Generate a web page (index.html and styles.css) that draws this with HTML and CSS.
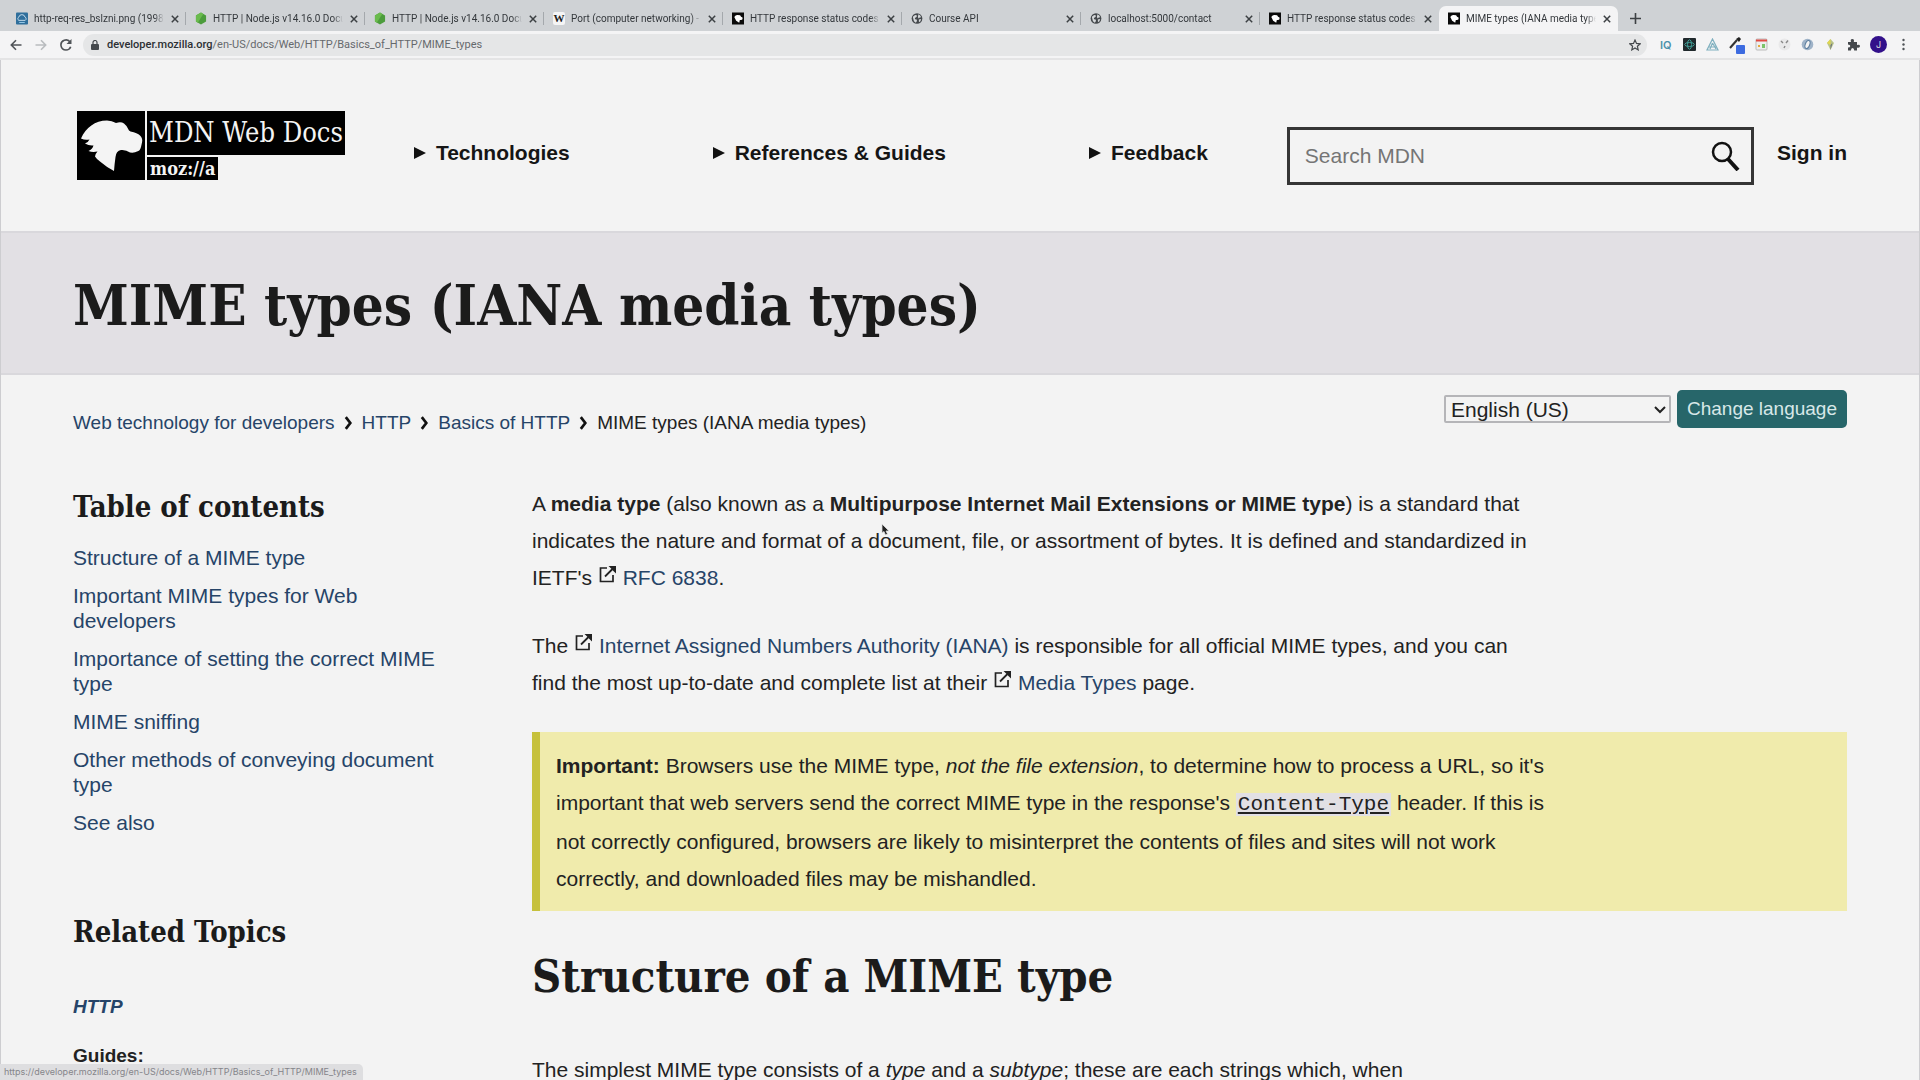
FILE: index.html
```html
<!DOCTYPE html>
<html lang="en">
<head>
<meta charset="utf-8">
<title>MIME types (IANA media types)</title>
<link rel="stylesheet" href="styles.css">
</head>
<body>
<svg class="defs" width="0" height="0" aria-hidden="true">
  <symbol id="close" viewBox="0 0 10 10"><path d="M1.8 1.8l6.4 6.4M8.2 1.8L1.8 8.2" stroke="#3c4043" stroke-width="1.5" fill="none"/></symbol>
  <symbol id="node" viewBox="0 0 13 14"><path d="M6.5 .5l5.5 3.2v6.6l-5.500 3.2L1 10.300V3.700z" fill="#4c9c3c"/><path d="M6.500 .5L1 3.700v6.600l2 1.200L9 2z" fill="#6abb4d"/></symbol>
  <symbol id="dino" viewBox="0 0 68 68"><path fill="#f4f4f4" d="M4 27C9 16 18 9 30 9q5 0 9 2.500 5-1.500 8 .5 3 2 5 7l1.500 1q7 1.500 9.500 4 3 3 2 7l-1 4.500q-1 4-4 4.500-2 1.500-7 1-4-3-9-2.500-5 1-5.500 7-1 7-1.500 14Q30 56 23 50q-3.500-2.500-5-5 .5-3 2.500-5-5 1-9-.5 4-2 5-5.500-4.500.5-8.500-2 3.500-1.500 4.500-4Q8 29 4 27z"/></symbol>
  <symbol id="mdn" viewBox="0 0 13 13"><rect width="13" height="13" fill="#0a0a0a"/><path d="M2.500 5Q4 2.500 6 2.800L8.800 3l1 1.500 1.600.8v2l-1.400.8H8.500L7.800 11 4.500 9z" fill="#fff"/></symbol>
  <symbol id="globe" viewBox="0 0 13 13"><circle cx="6.500" cy="6.500" r="5.800" fill="#44484c"/><path d="M2 4.500l2.500-1.800 2 .6-.5 1.700-1.800 1 .3 1.200 2 .6-.3 2-1 1.200-2-1.500-.6-2.200zM8 2l2 1.200 1 2-1.500.2-1.300 1L7.500 5zM8.500 7.500l2.500-.5-.8 2.500-1.600 1z" fill="#d5d8da"/></symbol>
  <symbol id="chev" viewBox="0 0 10 16"><path d="M2 1.500L7 8l-5 6.500" fill="none" stroke="#111" stroke-width="3"/></symbol>
  <symbol id="tri" viewBox="0 0 12 12"><path d="M0 0l12 6-12 6z" fill="#111"/></symbol>
  <symbol id="ext" viewBox="0 0 18 18"><path d="M8 3H1.500v13.500H14V10" fill="none" stroke="#222" stroke-width="1.700"/><path d="M6 11.500L13.500 4" stroke="#222" stroke-width="1.800"/><path d="M9.500 1H17v7.500l-2.600-2.600-2.300-2.300z" fill="#222"/></symbol>
</svg>

<div class="browser">
  <div class="tabs">
    <div class="tab"><svg class="fav" viewBox="0 0 13 13"><rect width="13" height="13" rx="1" fill="#2f6f9c"/><path d="M3 8.500a2 2 0 010-3.500 3.500 3.500 0 016.800 0 2 2 0 01.2 3.500z" fill="none" stroke="#cfe3f0"/><path d="M3.500 10.800h6" stroke="#9ed0ee"/></svg><span class="tab-title">http-req-res_bslzni.png (1998</span><svg class="x"><use href="#close"/></svg></div>
    <div class="tab"><svg class="fav"><use href="#node"/></svg><span class="tab-title">HTTP | Node.js v14.16.0 Docu</span><svg class="x"><use href="#close"/></svg></div>
    <div class="tab"><svg class="fav"><use href="#node"/></svg><span class="tab-title">HTTP | Node.js v14.16.0 Docu</span><svg class="x"><use href="#close"/></svg></div>
    <div class="tab"><span class="fav wiki">W</span><span class="tab-title">Port (computer networking) - \</span><svg class="x"><use href="#close"/></svg></div>
    <div class="tab"><svg class="fav"><use href="#mdn"/></svg><span class="tab-title">HTTP response status codes -</span><svg class="x"><use href="#close"/></svg></div>
    <div class="tab"><svg class="fav"><use href="#globe"/></svg><span class="tab-title">Course API</span><svg class="x"><use href="#close"/></svg></div>
    <div class="tab"><svg class="fav"><use href="#globe"/></svg><span class="tab-title">localhost:5000/contact</span><svg class="x"><use href="#close"/></svg></div>
    <div class="tab last"><svg class="fav"><use href="#mdn"/></svg><span class="tab-title">HTTP response status codes -</span><svg class="x"><use href="#close"/></svg></div>
    <div class="tab active"><svg class="fav"><use href="#mdn"/></svg><span class="tab-title">MIME types (IANA media types</span><svg class="x"><use href="#close"/></svg></div>
    <button class="new-tab" aria-label="New tab"><svg width="11" height="11"><path d="M5.500 0v11M0 5.500h11" stroke="#3c4043" stroke-width="1.600"/></svg></button>
  </div>

  <div class="toolbar">
    <button class="tool" aria-label="Back"><svg width="12" height="12" fill="none" stroke="#505458" stroke-width="1.600"><path d="M11.500 6H1.500M6 1.200L1.300 6 6 10.800"/></svg></button>
    <button class="tool" aria-label="Forward"><svg width="12" height="12" fill="none" stroke="#b9bcbf" stroke-width="1.600"><path d="M.5 6h10M6 1.200L10.700 6 6 10.800"/></svg></button>
    <button class="tool" aria-label="Reload"><svg width="12" height="12" fill="none" stroke="#505458" stroke-width="1.600"><path d="M10.300 3.500A5 5 0 106 11a5 5 0 004.700-3.300"/><path d="M11.500 0v5H6.500z" fill="#505458" stroke="none"/></svg></button>
    <div class="address">
      <svg width="8" height="10" viewBox="0 0 8 10"><rect y="4" width="8" height="6" rx="1" fill="#44484c"/><path d="M2 4.500V2.500a2 2 0 014 0v2" fill="none" stroke="#44484c" stroke-width="1.200"/></svg>
      <span class="url"><b>developer.mozilla.org</b>/en-US/docs/Web/HTTP/Basics_of_HTTP/MIME_types</span>
      <svg class="star" width="12" height="12" viewBox="0 0 12 12"><path d="M6 1l1.500 3.400 3.700.4-2.800 2.500.8 3.600L6 9l-3.200 1.900.8-3.600L.8 4.800l3.700-.4z" fill="none" stroke="#44484c" stroke-width="1.200"/></svg>
    </div>
    <div class="extensions">
      <span class="iq">IQ</span>
      <svg width="13" height="13"><rect width="13" height="13" rx="1" fill="#20292c"/><g fill="none" stroke="#3f9a93"><ellipse cx="6.500" cy="6.500" rx="4.800" ry="2"/><ellipse cx="6.500" cy="6.500" rx="2" ry="4.800"/></g></svg>
      <svg width="13" height="13"><path d="M6.500 1L12 12H1zM6.500 5L4 11M6.500 5L10 11M3 9h7" fill="none" stroke="#7fb0bf" stroke-width="1.200"/></svg>
      <svg class="picker" width="16" height="18"><path d="M1 12l7-8" stroke="#333" stroke-width="2"/><path d="M7 3l3-2 2 2-2 3z" fill="#222"/><rect x="7" y="9" width="9" height="9" rx="1" fill="#3d6be0"/></svg>
      <svg width="13" height="13"><rect x="1" y="1" width="11" height="11" rx="1" fill="#eee" stroke="#bbb"/><path d="M1 2.500h11" stroke="#e04b44" stroke-width="2"/><path d="M3 7h2v2H3z" fill="#e5a93c"/><path d="M7 6h3v4H7z" fill="#7cc36a"/></svg>
      <svg width="13" height="13"><circle cx="6.500" cy="6.500" r="6" fill="#e9e9ea"/><path d="M3 3l2 2M8 5l2-2.500M7 8l-1 2" stroke="#888" stroke-width="1.400"/></svg>
      <svg width="13" height="13"><circle cx="6.500" cy="6.500" r="5.800" fill="#9fb3c8"/><ellipse cx="6.500" cy="6.500" rx="2.200" ry="4.200" transform="rotate(20 6.500 6.500)" fill="#f3f3f3" stroke="#5e7f9f"/></svg>
      <svg width="13" height="13"><path d="M6.500 1l3.500 4-3.500 7L3 5z" fill="#b9c38a"/><path d="M6.500 1v6L3 5z" fill="#e2d84d"/><path d="M6.500 7l2-2-2 7z" fill="#66707a"/></svg>
      <svg width="13" height="13"><path d="M1 4h3q-1-3 1.300-3T6.800 4H10v3q3-.8 3 1.200T10 9.500V12.500H7.200q0-2.500-1.700-2.500T4 12.500H1V9.500q2.300 0 2.300-1.500T1 6.500z" fill="#44484c"/></svg>
      <span class="avatar">J</span>
      <svg width="13" height="13" fill="#505458"><circle cx="6.500" cy="2" r="1.200"/><circle cx="6.500" cy="6.500" r="1.200"/><circle cx="6.500" cy="11" r="1.200"/></svg>
    </div>
  </div>

  <div class="page">
    <header class="header">
      <a class="logo" href="#" aria-label="MDN Web Docs">
        <svg class="logo-head"><use href="#dino"/></svg>
        <span class="logo-words"><span class="logo-name">MDN Web Docs</span><span class="logo-moz">moz://a</span></span>
      </a>
      <nav class="nav">
        <button class="nav-item"><svg width="12" height="12"><use href="#tri"/></svg>Technologies</button>
        <button class="nav-item"><svg width="12" height="12"><use href="#tri"/></svg>References &amp; Guides</button>
        <button class="nav-item"><svg width="12" height="12"><use href="#tri"/></svg>Feedback</button>
      </nav>
      <form class="search">
        <input type="text" placeholder="Search MDN" aria-label="Search MDN">
        <button type="button" aria-label="Search"><svg width="30" height="30" fill="none" stroke="#111"><circle cx="12" cy="11" r="9" stroke-width="2.500"/><path d="M18 18l10 11" stroke-width="4"/></svg></button>
      </form>
      <a class="signin" href="#">Sign in</a>
    </header>

    <div class="title-band"><h1>MIME types (IANA media types)</h1></div>

    <div class="subhead">
      <nav class="crumbs" aria-label="Breadcrumb">
        <a href="#">Web technology for developers</a><svg><use href="#chev"/></svg><a href="#">HTTP</a><svg><use href="#chev"/></svg><a href="#">Basics of HTTP</a><svg><use href="#chev"/></svg><span>MIME types (IANA media types)</span>
      </nav>
      <form class="language">
        <span class="select-wrap"><select aria-label="Language"><option>English (US)</option></select><svg width="14" height="9"><path d="M2 2l5 5 5-5" fill="none" stroke="#222" stroke-width="2"/></svg></span>
        <button type="button">Change language</button>
      </form>
    </div>

    <div class="columns">
      <aside class="sidebar">
        <h2>Table of contents</h2>
        <ul>
          <li><a href="#">Structure of a MIME type</a></li>
          <li><a href="#">Important MIME types for Web developers</a></li>
          <li><a href="#">Importance of setting the correct MIME type</a></li>
          <li><a href="#">MIME sniffing</a></li>
          <li><a href="#">Other methods of conveying document type</a></li>
          <li><a href="#">See also</a></li>
        </ul>
        <h2>Related Topics</h2>
        <p class="topic"><a href="#">HTTP</a></p>
        <p class="guides">Guides:</p>
      </aside>
      <main class="article">
        <p>A <b>media type</b> (also known as a <b>Multipurpose Internet Mail Extensions or MIME type</b>) is a standard that indicates the nature and format of a document, file, or assortment of bytes. It is defined and standardized in IETF's <svg class="ext"><use href="#ext"/></svg> <a href="#">RFC 6838</a>.</p>
        <p>The <svg class="ext"><use href="#ext"/></svg> <a href="#">Internet Assigned Numbers Authority (IANA)</a> is responsible for all official MIME types, and you can find the most up-to-date and complete list at their <svg class="ext"><use href="#ext"/></svg> <a href="#">Media Types</a> page.</p>
        <div class="note"><p><b>Important:</b> Browsers use the MIME type, <i>not the file extension</i>, to determine how to process a URL, so it's important that web servers send the correct MIME type in the response's <a href="#"><code>Content-Type</code></a> header. If this is not correctly configured, browsers are likely to misinterpret the contents of files and sites will not work correctly, and downloaded files may be mishandled.</p></div>
        <h2>Structure of a MIME type</h2>
        <p>The simplest MIME type consists of a <i>type</i> and a <i>subtype</i>; these are each strings which, when</p>
      </main>
    </div>
  </div>

  <div class="status">https://developer.mozilla.org/en-US/docs/Web/HTTP/Basics_of_HTTP/MIME_types</div>
  <svg class="cursor" width="9" height="13" viewBox="0 0 9 13"><path d="M1 1v9l2-1.500L4.500 12l2-1L5 8h3z" fill="#222" stroke="#ddd" stroke-width=".8"/></svg>
</div>
</body>
</html>
```
FILE: styles.css
```css
* { box-sizing: border-box; }
body {
  margin: 0;
  background: #f3f3f3;
  color: #222;
  font-family: "Liberation Sans", Arial, sans-serif;
  font-size: 19px;
}
button, input, select { font: inherit; color: inherit; border: 0; background: none; padding: 0; margin: 0; }
a { color: #264468; text-decoration: none; }
h1, h2, p, ul { margin: 0; padding: 0; }
.defs { position: absolute; }

.browser { position: relative; display: flex; flex-direction: column; height: 100vh; overflow: hidden; }

/* Tab strip */
.tabs { display: flex; flex: none; height: 31px; padding: 6px 0 0 7px; background: #cfd2d5; font: 10px/25px Roboto, sans-serif; color: #33373b; }
.tab { position: relative; display: flex; align-items: center; flex: 0 1 179px; min-width: 0; padding: 0 6px 0 9px; gap: 6px; }
.tab:not(.active):not(.last)::after { content: ""; position: absolute; right: 0; top: 6px; width: 1px; height: 13px; background: #a4a8ac; }
.tab.active { background: #f4f4f5; border-radius: 7px 7px 0 0; }
.fav { flex: none; width: 12px; height: 13px; }
.wiki { background: #f5f5f5; border-radius: 2px; font: bold 11px/13px "Liberation Serif", serif; color: #222; text-align: center; }
.tab-title { flex: 1; min-width: 0; overflow: hidden; white-space: nowrap; -webkit-mask-image: linear-gradient(to left, transparent, #000 10px); mask-image: linear-gradient(to left, transparent, #000 10px); }
.x { flex: none; width: 10px; height: 10px; }
.new-tab { display: flex; align-items: center; margin-left: 12px; }

/* Toolbar */
.toolbar { display: flex; flex: none; align-items: center; height: 29px; padding: 0 10px; gap: 13px; background: #f4f4f5; border-bottom: 2px solid #e4e4e5; }
.tool { display: flex; }
.address { display: flex; flex: 1; align-items: center; height: 22px; margin-left: -2px; padding: 0 6px 0 8px; gap: 8px; border-radius: 11px; background: #e5e6e7; }
.url { flex: 1; font: 11px/22px Roboto, sans-serif; color: #65696d; }
.url b { font-weight: 500; color: #2c2f33; }
.extensions { display: flex; align-items: center; gap: 10px; font-family: Inter, sans-serif; }
.iq { width: 13px; font-size: 11px; font-weight: 600; color: #4b91ab; }
.avatar { width: 17px; height: 17px; border-radius: 9px; background: #32108a; color: #ddd; font-size: 9px; line-height: 17px; text-align: center; }

/* Page */
.page { flex: 1; min-height: 0; overflow: hidden; border: solid #cdcdd0; border-width: 0 1px; }
.header { display: flex; align-items: flex-start; height: 171px; padding: 51px 72px 0 76px; }
.logo { display: flex; gap: 2px; color: #f4f4f4; font-family: "DejaVu Serif Condensed", "DejaVu Serif", serif; }
.logo-head { width: 68px; height: 69px; background: #000; }
.logo-words { display: flex; flex-direction: column; align-items: flex-start; gap: 2px; }
.logo-name { padding: 0 2px; background: #000; font-size: 27px; line-height: 44px; }
.logo-moz { padding: 0 3px; background: #000; font-size: 18px; font-weight: bold; line-height: 23px; }
.nav { display: flex; gap: 143px; margin: 30px 79px 0 69px; }
.nav-item { display: flex; align-items: center; gap: 10px; font-size: 21px; font-weight: bold; line-height: 24px; white-space: nowrap; color: #151515; }
.search { display: flex; align-items: center; flex: 1; height: 58px; margin-top: 16px; padding: 0 11px 0 15px; border: 3px solid #353535; }
.search input { flex: 1; min-width: 0; outline: 0; font-size: 21px; }
.search input::placeholder { color: #757575; opacity: 1; }
.search button { display: flex; }
.signin { margin: 30px 0 0 23px; font-size: 21px; font-weight: bold; line-height: 24px; color: #151515; }

.title-band { padding: 36px 72px 32px; border: solid #d9d8dc; border-width: 2px 0; background: #e2e0e4; }
h1, h2 { font-family: "DejaVu Serif Condensed", "DejaVu Serif", serif; font-weight: bold; color: #1b1b1b; }
h1 { font-size: 56px; line-height: 72px; }

.subhead { display: flex; justify-content: space-between; align-items: flex-start; padding: 15px 72px 0; }
.crumbs { display: flex; align-items: center; gap: 9px; margin-top: 21px; line-height: 24px; }
.crumbs svg { width: 9px; height: 16px; }
.language { display: flex; align-items: center; gap: 6px; }
.select-wrap { position: relative; }
.select-wrap svg { position: absolute; right: 4px; top: 10px; pointer-events: none; }
.language select { display: block; width: 227px; height: 28px; padding: 0 5px; appearance: none; border: 2px solid #b5b5b8; border-radius: 2px; font-size: 21px; }
.language button { height: 38px; padding: 0 10px; border-radius: 5px; background: #27666a; color: #d8e8e8; }

.columns { display: grid; grid-template-columns: 370px minmax(0, 1fr); column-gap: 89px; padding: 50px 72px 0; }
.sidebar { padding-top: 2px; }
.sidebar h2 { font-size: 29px; line-height: 40px; }
.sidebar ul { list-style: none; margin: 18px 0 77px; font-size: 21px; line-height: 25px; }
.sidebar li { margin-bottom: 13px; }
.topic { margin-top: 43px; font-weight: bold; font-style: italic; line-height: 24px; }
.guides { margin-top: 25px; font-weight: bold; line-height: 24px; }
.article { font-size: 21px; line-height: 37px; }
.article p { max-width: 1010px; margin-bottom: 31px; }
.ext { width: 18px; height: 18px; margin-left: 1px; vertical-align: 2px; }
.article .note { padding: 15px 16px 14px; border-left: 8px solid #c6c13c; background: #f0ebac; }
.article .note p { margin: 0; }
.note code { padding: 0 2px; background: #e2e0e4; color: #222; font-family: "Liberation Mono", monospace; text-decoration: underline; }
.article h2 { margin: 36px 0 44px; font-size: 45px; line-height: 60px; }

.status { position: absolute; left: 0; bottom: 0; padding: 0 6px 0 4px; border-radius: 0 5px 0 0; background: #dedee0; color: #85858a; font: 9px/16px Inter, sans-serif; }
.cursor { position: absolute; left: 881px; top: 523px; }
```
